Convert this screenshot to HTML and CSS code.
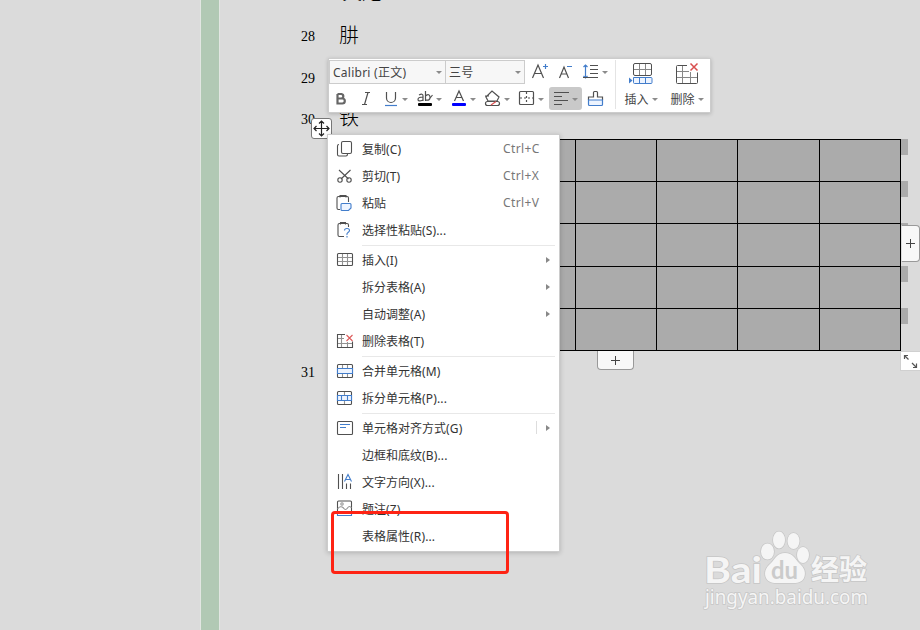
FILE: index.html
```html
<!DOCTYPE html>
<html lang="zh-CN">
<head>
<meta charset="utf-8">
<title>文档</title>
<link rel="stylesheet" href="styles.css">
</head>
<body>
<div class="app">
  <div class="margin"></div>
  <div class="rail"></div>
  <main class="doc">
    <div class="line first"><span class="num"></span><span class="word">火炮</span></div>
    <div class="line"><span class="num">28</span><span class="word">肼</span></div>
    <div class="line"><span class="num">29</span><span class="word"></span></div>
    <div class="line short"><span class="num">30</span><span class="word">铁</span></div>
    <div class="tablewrap">
      <div class="table">
        <i></i><i></i><i></i><i></i><i></i><i></i><i></i>
        <i></i><i></i><i></i><i></i><i></i><i></i><i></i>
        <i></i><i></i><i></i><i></i><i></i><i></i><i></i>
        <i></i><i></i><i></i><i></i><i></i><i></i><i></i>
        <i></i><i></i><i></i><i></i><i></i><i></i><i></i>
      </div>
      <div class="ends"><b></b><b></b><b></b><b></b><b></b></div>
    </div>
    <div class="line last"><span class="num">31</span><span class="word"></span></div>
  </main>

  <div class="handle move"><svg width="21" height="21" viewBox="0 0 21 21"><path d="M3 10.500h15M10.500 3v15M5.500 8L3 10.500l2.500 2.500M15.500 8l2.500 2.500-2.500 2.500M8 5.500L10.500 3 13 5.500M8 15.500l2.500 2.500 2.500-2.500" fill="none" stroke="#222" stroke-width="1.2"/></svg></div>
  <div class="handle addrow"><svg width="9" height="9"><path d="M0 4.500h9M4.500 0v9" stroke="#444"/></svg></div>
  <div class="handle addcol"><svg width="9" height="9"><path d="M0 4.500h9M4.500 0v9" stroke="#444"/></svg></div>
  <div class="handle resize"><svg width="19" height="19" fill="none" stroke="#555" stroke-width="1.2"><path d="M3.500 7V3.500H7M3.500 3.500l4 4M11 11l4 4M15.500 11.500v4H12"/></svg></div>

  <section class="toolbar">
    <div class="tools">
      <div class="selects">
        <div class="select font">Calibri (正文)<u class="caret"></u></div>
        <div class="select size">三号<u class="caret"></u></div>
        <svg class="grow" width="84" height="24" viewBox="0 0 84 24" fill="none" stroke="#505050" stroke-width="1.2">
          <path d="M7.500 18L13 5l5.500 13M9.500 13.500h7M34.500 18L39 7l4.500 11M36 14h6"/>
          <path d="M18 6.500h5M20.500 4v5M42 6.500h5M60.500 5v13M58.500 7l2-2 2 2M58.500 16l2 2 2-2" stroke="#427dcb"/>
          <path d="M65 5.500h8M65 9.500h8M65 13.500h8M58 17.500h15" stroke-width="1"/>
          <path d="M77 11h6l-3 3z" fill="#8b8b8b" stroke="none"/>
        </svg>
      </div>
      <svg class="format" width="284" height="26" viewBox="0 0 284 26" fill="none" stroke="#505050" stroke-width="1.2">
        <rect x="220" y="2" width="33" height="23" rx="3" fill="#c9c9c9" stroke="none"/>
        <path d="M8.500 9v9.500h4.800a2.500 2.500 0 0 0 0-5h-4.800h4a2.300 2.300 0 0 0 0-4.500h-4" stroke="#666" stroke-width="2.200"/>
        <path d="M36 7.500h5M33 19.500h5M39 7.500l-3.500 12M57.500 7v6a4.500 4.500 0 0 0 9 0V7"/>
        <path d="M56 20.500h12" stroke="#427dcb"/>
        <rect x="89" y="18" width="14" height="3" rx="1" fill="#000" stroke="none"/>
        <rect x="123" y="18" width="14" height="3" rx="1" fill="#0000ff" stroke="none"/>
        <path d="M125.500 16l4.500-10 4.500 10M127 12.500h6"/>
        <path d="M90 10q4-2 4 1v5M94 12q-5 0-5 2.500t5 .5M96.500 6v10M96.500 11q4-3 4.500 1t-4.500 3M99.500 15l4-5"/>
        <path d="M157 12l6-6 7 6-2 4h-9l-2-4zM156 11h4"/>
        <rect x="156.500" y="16.500" width="14" height="4" rx="2"/><path d="M162 20l5-3.500" stroke="#db5151"/>
        <rect x="190.500" y="6.500" width="14" height="13" rx="1"/><path d="M197.500 7v12M191 13h13" stroke-dasharray="2 2"/>
        <path d="M225 7.500h15M225 11.500h8M225 15.500h14M225 19.500h8"/>
        <path d="M259.500 15v-3h5V7.500q0-1 1-1h2q1 0 1 1V12h5v3"/><path d="M259.500 15v4.500q0 1 1 1h12q1 0 1-1V15z" stroke="#427dcb" fill="#edf4ff"/>
        <path d="M73 13h6l-3 3zM107 13h6l-3 3zM141 13h6l-3 3zM175 13h6l-3 3zM209 13h6l-3 3zM243 13h6l-3 3z" fill="#8b8b8b" stroke="none"/>
      </svg>
    </div>
    <div class="big first-big">
      <svg width="26" height="24" viewBox="0 0 26 24" fill="none" stroke="#505050"><rect x="5.500" y="1.500" width="18" height="12" rx="1.500"/><path d="M11.500 2v11M17.500 2v11M6 7.500h17" stroke="#888"/><path d="M6 15.500h17q1 0 1 1v4q0 1-1 1H6.500q-1 0-1-1v-5zM11.500 15.500v6M17.500 15.500v6" stroke="#427dcb" fill="#edf4ff"/><path d="M1 15.500l3.500 3-3.500 3z" fill="#427dcb" stroke="none"/></svg>
      <span>插入<u class="caret"></u></span>
    </div>
    <div class="big">
      <svg width="26" height="24" viewBox="0 0 26 24" fill="none" stroke="#505050"><path d="M13 3.500H3.500q-1 0-1 1v16q0 1 1 1h19q1 0 1-1V10.500"/><path d="M8.500 4v17M16.500 10v11M3 9.500h12M3 15.500h20" stroke="#888"/><path d="M16.500 1.500l7 7M23.500 1.500l-7 7" stroke="#d84e4e" stroke-width="1.500"/></svg>
      <span>删除<u class="caret"></u></span>
    </div>
  </section>

  <nav class="menu">
    <div class="item"><svg viewBox="0 0 18 18"><rect x="5.500" y="1.500" width="10" height="12" rx="1.500"/><path d="M3 4.500q-1.500 0-1.500 1.500v8.500q0 1.500 1.500 1.500h7q1.500 0 1.500-2"/></svg><span>复制<em>(C)</em></span><kbd>Ctrl+C</kbd></div>
    <div class="item"><svg viewBox="0 0 18 18"><path d="M3 3l9.500 9M14.500 3L5 12"/><circle cx="4" cy="13" r="2.200"/><circle cx="13" cy="13" r="2.200"/></svg><span>剪切<em>(T)</em></span><kbd>Ctrl+X</kbd></div>
    <div class="item"><svg viewBox="0 0 18 18"><path d="M4 15.500H2.500q-1.500 0-1.500-1.500V4q0-1.500 1.500-1.500H11Q12.500 2.500 12.500 4v4M4 3.500v-2h6v2"/><path d="M6 9.500h8q1 0 1 1V14l-2.500 2.500H6q-1 0-1-1v-5q0-1 1-1z" class="bluefill"/></svg><span>粘贴</span><kbd>Ctrl+V</kbd></div>
    <div class="item"><svg viewBox="0 0 18 18"><path d="M8 15.500H3.500q-1.500 0-1.500-1.500V4q0-1.500 1.500-1.500H11Q12.500 2.500 12.500 4v2M4.500 3.500v-2h5v2"/><path d="M8.500 9.500q0-2 2.500-2t2.500 2q0 1-1.500 2t-1 2.500M11 15v1.500" class="blue"/></svg><span>选择性粘贴<em>(S)...</em></span></div>
    <hr>
    <div class="item"><svg viewBox="0 0 18 18"><rect x="1.500" y="2.500" width="15" height="12" rx="1"/><path d="M6.500 3v11M11.500 3v11M2 6.500h14M2 10.500h14" class="gray"/></svg><span>插入<em>(I)</em></span><s class="arrow"></s></div>
    <div class="item"><svg viewBox="0 0 18 18"></svg><span>拆分表格<em>(A)</em></span><s class="arrow"></s></div>
    <div class="item"><svg viewBox="0 0 18 18"></svg><span>自动调整<em>(A)</em></span><s class="arrow"></s></div>
    <div class="item"><svg viewBox="0 0 18 18"><path d="M9 2.500H1.500v13h15v-6"/><path d="M5.500 3v12M11.500 10v5M2 6.500h6M2 11.500h14" class="gray"/><path d="M10.500 3l6 6M16.500 3l-6 6" class="red"/></svg><span>删除表格<em>(T)</em></span></div>
    <hr>
    <div class="item"><svg viewBox="0 0 18 18"><rect x="1.500" y="2.500" width="15" height="13" rx="1"/><path d="M6.500 3v3M11.500 3v3M6.500 12v3M11.500 12v3" class="gray"/><path d="M1.500 6.500h15v5h-15z" class="bluefill"/></svg><span>合并单元格<em>(M)</em></span></div>
    <div class="item"><svg viewBox="0 0 18 18"><rect x="1.500" y="2.500" width="14" height="13" rx="1"/><path d="M8.500 3v3M8.500 12v3" class="gray"/><path d="M1.500 6.500h14v5h-14zM5.500 6.500v5M11.500 6.500v5" class="bluefill"/></svg><span>拆分单元格<em>(P)...</em></span></div>
    <hr>
    <div class="item"><svg viewBox="0 0 18 18"><rect x="1.500" y="2.500" width="15" height="13" rx="1"/><path d="M4 5.500h10M4 8.500h6" class="blue"/></svg><span>单元格对齐方式<em>(G)</em></span><s class="divider"></s><s class="arrow"></s></div>
    <div class="item"><svg viewBox="0 0 18 18"></svg><span>边框和底纹<em>(B)...</em></span></div>
    <div class="item"><svg viewBox="0 0 18 18"><path d="M2.500 1v15M6.500 1v15M10.500 10.500V16M14.500 10.500V16"/><path d="M8.500 8.500L12 1.500l3.500 7M10 6.500h4" class="blue"/></svg><span>文字方向<em>(X)...</em></span></div>
    <div class="item"><svg viewBox="0 0 18 18"><path d="M1.500 12V2q0-1 1-1h12q1 0 1 1v10"/><path d="M1.500 9q3-4 6-1 2 3 4 0t4 0" class="gray"/><circle cx="6" cy="4" r="1.200" class="gray"/><path d="M1.500 12.500v3h14v-3" class="blue"/></svg><span>题注<em>(Z)</em></span></div>
    <div class="item"><svg viewBox="0 0 18 18"></svg><span>表格属性<em>(R)...</em></span></div>
  </nav>
  <div class="highlight"></div>

  <svg class="watermark" width="180" height="90" viewBox="0 0 180 90">
    <g class="mark">
      <text x="4" y="60" class="brand" textLength="58" lengthAdjust="spacingAndGlyphs">Bai</text>
      <ellipse cx="67.500" cy="28.500" rx="6.500" ry="8"/><ellipse cx="79" cy="17" rx="6" ry="8.500"/><ellipse cx="93.500" cy="18" rx="6" ry="8"/><ellipse cx="103" cy="32" rx="6" ry="8"/>
      <path d="M85 30c-8 0-10 6-14 10-6 5-7 10-5 15 3 6 10 5 19 5s16 1 19-5c2-5 1-10-5-15-4-4-6-10-14-10z"/>
      <text x="111" y="57" class="cn">经验</text>
      <text x="5" y="81" class="url" textLength="163" lengthAdjust="spacingAndGlyphs">jingyan.baidu.com</text>
    </g>
    <text x="71" y="56" class="du" textLength="27" lengthAdjust="spacingAndGlyphs">du</text>
  </svg>
</div>
</body>
</html>
```
FILE: styles.css
```css
* { box-sizing: border-box; }
body { margin: 0; }
.app {
  position: relative;
  display: flex;
  width: 920px;
  height: 630px;
  overflow: hidden;
  background: #dbdbdb;
  font-family: "Noto Sans", "Noto Sans CJK SC", sans-serif;
}
.margin { width: 200px; }
.rail { width: 20px; background: #b1c9b4; border: solid #e2e6e2; border-width: 0 1px; }
.doc { width: 700px; }
.line { display: flex; align-items: center; height: 42px; color: #000; }
.line.first { height: 16px; }
.line.first .word { position: relative; top: -14px; left: 3px; }
.num { width: 95px; text-align: right; font: 14px "Liberation Serif", serif; }
.word { margin-left: 24px; font: 20px/28px "Noto Sans CJK SC", sans-serif; font-weight: 300; margin-top: -5px; }
.line.short { height: 39px; }
.tablewrap { display: flex; margin-left: 111px; }
.table {
  display: grid;
  grid-template-columns: repeat(7, 81.280px);
  grid-template-rows: 42px 42px 43px 42px 42px;
  width: 570px;
  height: 212px;
  background: #ababab;
  border: solid #000;
  border-width: 1px 0 0 1px;
}
.table i { border: solid #000; border-width: 0 1px 1px 0; }
.ends { display: grid; grid-template-rows: 42px 42px 43px 42px 42px; }
.ends b { width: 7px; height: 16px; background: #ababab; }
.last { height: 44px; }

.handle { position: absolute; display: flex; align-items: center; justify-content: center; background: #f8f8f8; border: 1px solid #999; }
.move { left: 311px; top: 118px; width: 21px; height: 21px; border-color: #777; border-radius: 3px; background: #fff; }
.move svg { flex: none; }
.addrow { left: 597px; top: 351px; width: 37px; height: 19px; border-top: 0; border-radius: 0 0 4px 4px; }
.addcol { left: 901px; top: 225px; width: 19px; height: 37px; border-left-color: #ddd; border-radius: 0 4px 4px 0; }
.resize { left: 900px; top: 351px; width: 21px; height: 20px; background: #fff; border-color: #d0d0d0; justify-content: flex-start; }

.toolbar {
  position: absolute;
  left: 328px;
  top: 58px;
  width: 383px;
  height: 55px;
  display: flex;
  background: #fff;
  border: 1px solid #ccc;
  box-shadow: 0 1px 4px #0003;
  color: #444;
  font-size: 12px;
}
.tools { width: 287px; height: 49px; margin-top: 1px; border-right: 1px solid #e4e4e4; }
.selects { display: flex; height: 24px; }
.select { position: relative; display: flex; align-items: center; justify-content: space-between; padding: 0 3px; background: #f7f7f7; border: 1px solid #ccc; letter-spacing: .25px; }
.font { width: 117px; }
.size { width: 80px; margin-left: -1px; }
.caret { display: inline-block; border: solid transparent; border-width: 3px 3px 0; border-top-color: #8b8b8b; }
.grow { margin-left: 0; }
.format { display: block; margin-top: 1px; }
.big { display: flex; flex-direction: column; align-items: center; width: 46px; padding-top: 3px; }
.first-big { margin-left: 2px; }
.big span { display: flex; align-items: center; line-height: 17px; margin-top: 5px; }
.big .caret { margin-left: 3px; }

.menu {
  position: absolute;
  left: 327px;
  top: 134px;
  width: 233px;
  height: 418px;
  padding: 1px 0;
  background: #fff;
  border: 1px solid #ccc;
  box-shadow: 0 1px 5px #0003;
  font-size: 12px;
  color: #333;
}
.item { display: flex; align-items: center; height: 27px; padding: 0 9px 2px 8px; }
.item svg { flex: none; width: 18px; height: 18px; margin-right: 8px; fill: none; stroke: #505050; stroke-width: 1.100; }
.item .blue { stroke: #427dcb; }
.item .bluefill { stroke: #427dcb; fill: #edf4ff; }
.item .gray { stroke: #929292; }
.item .red { stroke: #dc5b5b; }
.item span { flex: 1; white-space: nowrap; }
.item em { font-style: normal; letter-spacing: .15px; }
.item kbd { width: 47px; font: 12px "Noto Sans", sans-serif; color: #777; letter-spacing: .4px; }
.menu hr { height: 1px; margin: 1px 4px 1px 34px; border: 0; background: #e8e8e8; }
.arrow { width: 0; border: solid transparent; border-width: 3px 0 3px 4px; border-left-color: #888; }
.divider { width: 1px; height: 13px; margin-right: 9px; background: #ddd; }
.highlight { position: absolute; left: 331px; top: 511px; width: 178px; height: 63px; border: 3px solid #fe2314; border-radius: 4px; }

.watermark { position: absolute; left: 700px; top: 523px; }
.mark { fill: #f5f5f5; stroke: #c6c6c6; stroke-width: 1.500; paint-order: stroke; }
.brand { font: bold 36px Lato, sans-serif; }
.du { font: bold 25px Lato, sans-serif; fill: #cbcbcb; }
.cn { font: bold 28px "Noto Sans CJK SC", sans-serif; }
.url { font: 19px "Noto Sans", sans-serif; }
```
